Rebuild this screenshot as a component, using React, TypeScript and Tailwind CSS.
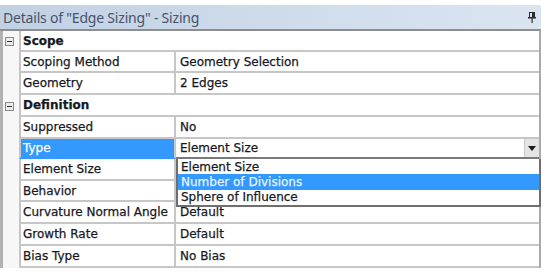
import React from 'react';

interface Row {
  name: string;
  value?: string;
  group?: boolean;
  h: string;
}

const rows: Row[] = [
  { name: 'Scope', group: true, h: 'h-[21px]' },
  { name: 'Scoping Method', value: 'Geometry Selection', h: 'h-[21px]' },
  { name: 'Geometry', value: '2 Edges', h: 'h-[22px]' },
  { name: 'Definition', group: true, h: 'h-[22px]' },
  { name: 'Suppressed', value: 'No', h: 'h-[22px]' },
  { name: 'Type', value: '', h: 'h-[20px]' },
  { name: 'Element Size', value: '', h: 'h-[22px]' },
  { name: 'Behavior', value: '', h: 'h-[21px]' },
  { name: 'Curvature Normal Angle', value: 'Default', h: 'h-[22px]' },
  { name: 'Growth Rate', value: 'Default', h: 'h-[22px]' },
  { name: 'Bias Type', value: 'No Bias', h: 'h-[22px]' },
];

const options = ['Element Size', 'Number of Divisions', 'Sphere of Influence'];

const Pin = () => (
  <svg width="8" height="11" viewBox="0 0 8 11" className="text-[#2b2b2b]">
    <rect x="1.5" y="0.5" width="5" height="5" fill="none" stroke="currentColor" />
    <rect x="4" y="1" width="2" height="4" fill="currentColor" />
    <rect x="0" y="5" width="8" height="1.5" fill="currentColor" />
    <rect x="3.5" y="6" width="1.2" height="5" fill="currentColor" />
  </svg>
);

const MinusBox = () => (
  <div className="w-[9px] h-[9px] border border-[#8a8a8a] bg-[#ececec] flex items-center justify-center">
    <div className="w-[5px] h-px bg-[#333]" />
  </div>
);

export default function App() {
  return (
    <div className="w-[548px] h-[272px] bg-white overflow-hidden font-['DejaVu_Sans',sans-serif] text-[12px] text-[#181822] [-webkit-text-stroke:0.25px_currentColor]">
      <div className="h-[5px]" />
      {/* Title bar */}
      <div className="mr-[7px] h-[24px] flex items-center justify-between pl-[3px] pr-[5px] bg-gradient-to-r from-[#c1d1e4] to-[#dae5f1]">
        <span className="font-['Noto_Sans',sans-serif] text-[14px] text-[#47536a] tracking-[-0.2px] [-webkit-text-stroke:0px]">
          Details of "Edge Sizing" - Sizing
        </span>
        <Pin />
      </div>

      <div className="relative mr-[7px] border-t-2 border-t-[#8e8e8e] border-r-2 border-r-[#a9a9a9]">
        {rows.map((r) => (
          <div key={r.name} className={`flex ${r.h}`}>
            <div className="w-[19px] shrink-0 border-l-[3px] border-l-[#b2b2b2] bg-[#f7f7f7] flex items-center pl-[2px]">
              {r.group && <MinusBox />}
            </div>
            {r.group ? (
              <div className="flex-1 border-l-2 border-b-2 border-[#c6c6c6] flex items-center pl-[2px] font-bold">
                {r.name}
              </div>
            ) : (
              <>
                <div
                  className={`w-[157px] shrink-0 border-l-2 border-r-2 border-b-2 border-[#c6c6c6] flex items-center pl-[2px] ${
                    r.name === 'Type' ? 'bg-[#3399ff] text-white border-b-[#3399ff]' : ''
                  }`}
                >
                  {r.name}
                </div>
                {r.name === 'Type' ? (
                  <div className="flex-1 flex items-stretch border-b-2 border-[#7a7a7a]">
                    <div className="flex-1 flex items-center pl-[4px]">Element Size</div>
                    <div className="w-[15px] bg-[#e4e4e4] border-l border-[#c9c9c9] flex items-center justify-center">
                      <svg width="8" height="5" viewBox="0 0 8 5">
                        <path d="M0 0h8L4 5z" fill="#1a1a1a" />
                      </svg>
                    </div>
                  </div>
                ) : (
                  <div className="flex-1 border-b-2 border-[#c6c6c6] flex items-center pl-[4px]">{r.value}</div>
                )}
              </>
            )}
          </div>
        ))}

        {/* Open dropdown list */}
        <div className="absolute left-[176px] top-[128px] w-[365px] h-[48px] bg-white border-2 border-t-0 border-[#6e6e6e] flex flex-col">
          {options.map((o) => (
            <div
              key={o}
              className={`h-[15.3px] flex items-center pl-[3px] ${
                o === 'Number of Divisions' ? 'bg-[#3399ff] text-[#e8f2ff]' : ''
              }`}
            >
              {o}
            </div>
          ))}
        </div>
      </div>
    </div>
  );
}
